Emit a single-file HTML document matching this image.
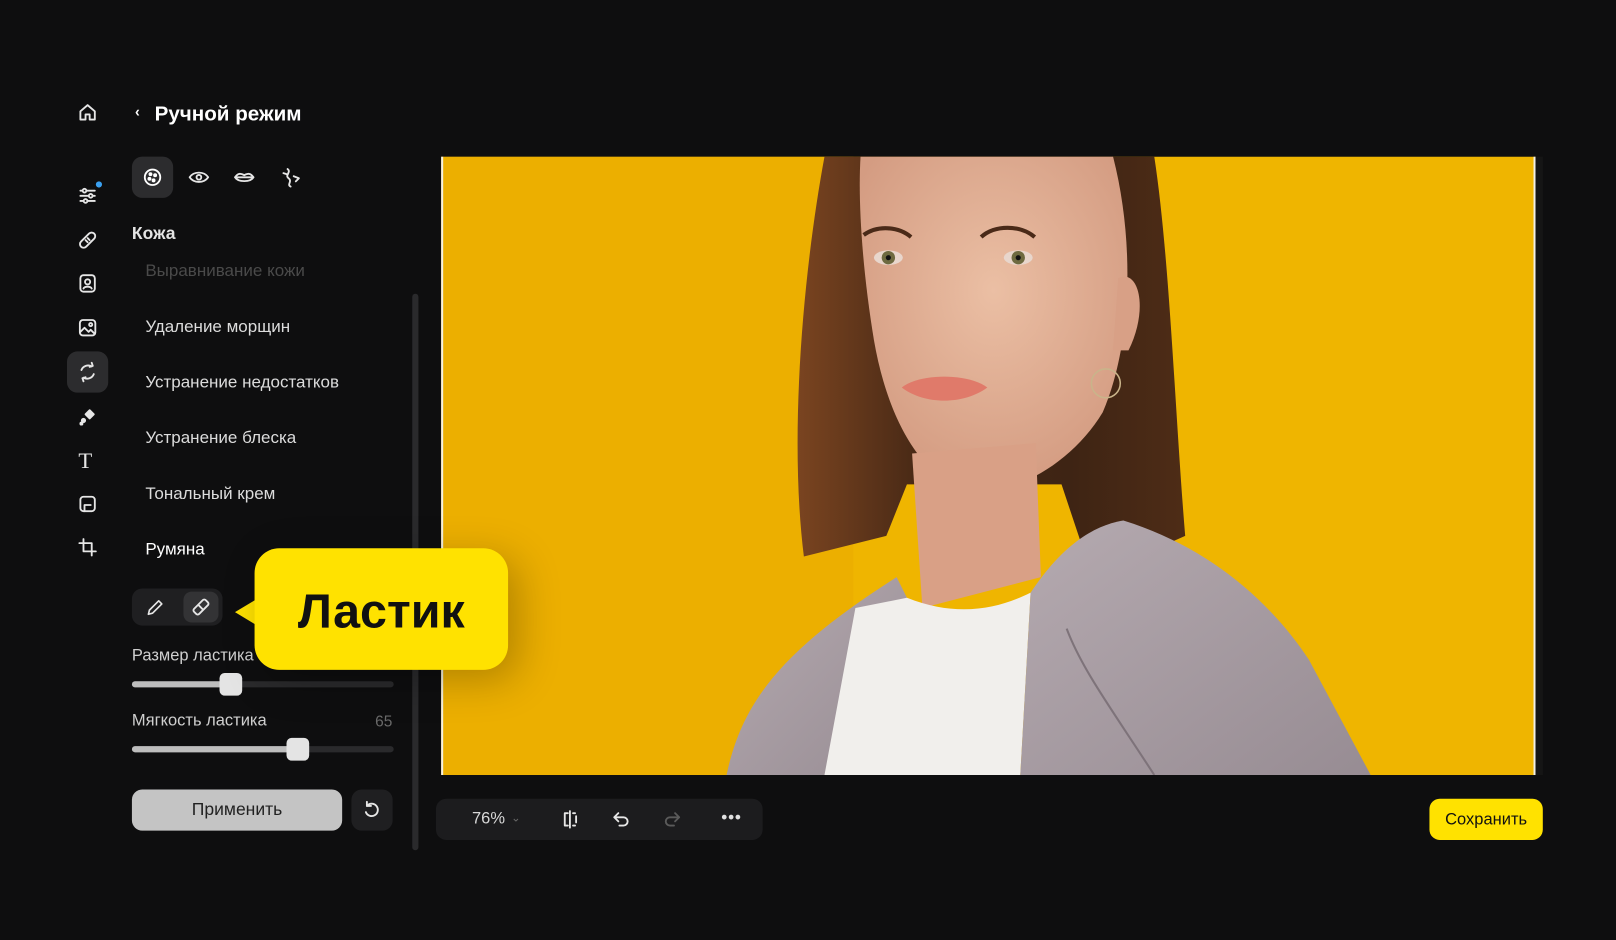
<!DOCTYPE html>
<html><head><meta charset="utf-8">
<style>
html,body{margin:0;padding:0;background:#0e0e0f;width:1616px;height:940px;overflow:hidden;font-family:"Liberation Sans","DejaVu Sans",sans-serif;}
#w{position:absolute;left:0;top:0;width:1568px;height:912px;transform:scale(1.0306);transform-origin:0 0;}
.a{position:absolute}
.ic{position:absolute;width:22px;height:22px;}
.ic svg{width:22px;height:22px;fill:none;stroke:#e6e6e6;stroke-width:1.8;stroke-linecap:round;stroke-linejoin:round}
.li{position:absolute;left:141px;font-size:16.5px;color:#dcdcdc;line-height:20px}
</style></head><body><div id="w">

<!-- left rail icons -->
<div class="ic" style="left:74px;top:98px"><svg viewBox="0 0 22 22"><path d="M4 10 L11 4 L18 10 V18 H13 V13 H9 V18 H4 Z"/></svg></div>
<div class="ic" style="left:74px;top:178px"><svg viewBox="0 0 22 22"><path d="M4 7h14M4 12h14M4 17h14"/><circle cx="8" cy="7" r="1.8" fill="#0e0e0f"/><circle cx="14" cy="12" r="1.8" fill="#0e0e0f"/><circle cx="9" cy="17" r="1.8" fill="#0e0e0f"/></svg></div>
<div class="a" style="left:93px;top:176px;width:6px;height:6px;border-radius:3px;background:#3aa0f0"></div>
<div class="ic" style="left:74px;top:222px"><svg viewBox="0 0 22 22"><rect x="2" y="7.5" width="18" height="7" rx="3.5" transform="rotate(-45 11 11)"/><path d="M9 11l2 2M11 9l2 2"/></svg></div>
<div class="ic" style="left:74px;top:264px"><svg viewBox="0 0 22 22"><rect x="4" y="3" width="14" height="16" rx="3"/><circle cx="11" cy="9.5" r="2.5"/><path d="M7 16c1-2.5 7-2.5 8 0"/></svg></div>
<div class="ic" style="left:74px;top:307px"><svg viewBox="0 0 22 22"><rect x="3.5" y="3.5" width="15" height="15" rx="3"/><path d="M4 15l4-4 4 4 2-2 4 4"/><circle cx="14" cy="8" r="1.5"/></svg></div>
<div class="a" style="left:65px;top:341px;width:40px;height:40px;border-radius:10px;background:#2c2c2e"></div>
<div class="ic" style="left:74px;top:350px"><svg viewBox="0 0 22 22"><path d="M15 5.5A7 7 0 0 0 5 9M7 16.5A7 7 0 0 0 17 13"/><path d="M15 2l1 3-3 1M7 20l-1-3 3-1"/></svg></div>
<div class="ic" style="left:74px;top:393px"><svg viewBox="0 0 22 22"><path d="M13 5l4 4-4 4-4-4z" fill="#e6e6e6"/><circle cx="7" cy="15" r="1.6" fill="#e6e6e6"/><circle cx="5" cy="18" r="1" fill="#e6e6e6"/></svg></div>
<div class="a" style="left:76px;top:434px;font-family:'Liberation Serif',serif;font-size:22px;color:#e6e6e6">T</div>
<div class="ic" style="left:74px;top:478px"><svg viewBox="0 0 22 22"><rect x="4" y="4" width="14" height="14" rx="3"/><path d="M8 18v-6h6"/></svg></div>
<div class="ic" style="left:74px;top:520px"><svg viewBox="0 0 22 22"><path d="M7 3v12h12M3 7h12v12"/></svg></div>

<!-- title -->
<div class="a" style="left:131px;top:100px;color:#fff;font-size:14px;font-weight:bold">‹</div>
<div class="a" style="left:150px;top:100px;color:#fff;font-size:20px;font-weight:bold">Ручной режим</div>

<!-- tabs -->
<div class="a" style="left:128px;top:152px;width:40px;height:40px;border-radius:10px;background:#2c2c2e"></div>
<div class="ic" style="left:137px;top:161px"><svg viewBox="0 0 22 22" style="stroke:#fff"><circle cx="11" cy="11" r="7.5"/><circle cx="9" cy="8" r="1" fill="#fff"/><circle cx="13.5" cy="9" r="1" fill="#fff"/><circle cx="8" cy="12.5" r="1" fill="#fff"/><circle cx="12" cy="14" r="1" fill="#fff"/></svg></div>
<div class="ic" style="left:182px;top:161px"><svg viewBox="0 0 22 22"><path d="M2 11c4-6 14-6 18 0c-4 6-14 6-18 0z"/><circle cx="11" cy="11" r="2.3"/></svg></div>
<div class="ic" style="left:226px;top:161px"><svg viewBox="0 0 22 22"><path d="M2 11c3-4 5-4 9-2c4-2 6-2 9 2c-3 5-15 5-18 0z M3 11h16"/></svg></div>
<div class="ic" style="left:271px;top:161px"><svg viewBox="0 0 22 22"><path d="M8 3c4 3-3 6 1 9s-2 6 2 8M4 7l3 1M14 10l5 2M16 15l3-3"/></svg></div>

<div class="a" style="left:128px;top:217px;color:#e4e4e4;font-size:17px;font-weight:bold">Кожа</div>
<div class="li" style="top:253px;color:#4a4a4a">Выравнивание кожи</div>
<div class="li" style="top:307px">Удаление морщин</div>
<div class="li" style="top:361px">Устранение недостатков</div>
<div class="li" style="top:415px">Устранение блеска</div>
<div class="li" style="top:469px">Тональный крем</div>
<div class="li" style="top:523px;color:#fff">Румяна</div>
<div class="a" style="left:400px;top:285px;width:6px;height:540px;border-radius:3px;background:#2a2a2c"></div>

<!-- tools -->
<div class="a" style="left:128px;top:571px;width:88px;height:36px;border-radius:10px;background:#1f1f21"></div>
<div class="a" style="left:178px;top:574px;width:34px;height:30px;border-radius:8px;background:#333335"></div>
<div class="ic" style="left:139px;top:578px"><svg viewBox="0 0 22 22" style="stroke-width:1.6"><path d="M5 18l1-4 9-9 3 3-9 9z"/></svg></div>
<div class="ic" style="left:184px;top:578px"><svg viewBox="0 0 22 22"><rect x="3" y="7.5" width="16" height="7" rx="2" transform="rotate(-45 11 11)"/><path d="M8.5 9l4.5 4.5"/></svg></div>

<div class="a" style="left:128px;top:628px;color:#cfcfcf;font-size:16px">Размер ластика</div>
<div class="a" style="left:128px;top:661px;width:254px;height:6px;border-radius:3px;background:#2a2a2c"></div>
<div class="a" style="left:128px;top:661px;width:96px;height:6px;border-radius:3px;background:#bdbdbd"></div>
<div class="a" style="left:213px;top:653px;width:22px;height:22px;border-radius:5px;background:#e4e4e4"></div>
<div class="a" style="left:128px;top:691px;color:#cfcfcf;font-size:16px">Мягкость ластика</div>
<div class="a" style="left:364px;top:692px;color:#6a6a6a;font-size:15px">65</div>
<div class="a" style="left:128px;top:724px;width:254px;height:6px;border-radius:3px;background:#2a2a2c"></div>
<div class="a" style="left:128px;top:724px;width:161px;height:6px;border-radius:3px;background:#bdbdbd"></div>
<div class="a" style="left:278px;top:716px;width:22px;height:22px;border-radius:5px;background:#e4e4e4"></div>

<div class="a" style="left:128px;top:766px;width:204px;height:40px;border-radius:10px;background:#c4c4c4;color:#222;font-size:17px;text-align:center;line-height:40px">Применить</div>
<div class="a" style="left:341px;top:766px;width:40px;height:40px;border-radius:10px;background:#1f1f21"></div>
<div class="ic" style="left:350px;top:775px"><svg viewBox="0 0 22 22"><path d="M6 7a6 6 0 1 1-1 6"/><path d="M6 3v4h4"/></svg></div>

<!-- photo -->
<svg class="a" style="left:428px;top:152px" width="1062" height="600" viewBox="428 152 1062 600">
<defs>
<linearGradient id="hair" x1="0" y1="0" x2="1" y2="0"><stop offset="0" stop-color="#7a4420"/><stop offset=".3" stop-color="#4a2a16"/><stop offset=".7" stop-color="#3e2414"/><stop offset="1" stop-color="#4e2c16"/></linearGradient>
<radialGradient id="skin" cx=".5" cy=".4" r=".6"><stop offset="0" stop-color="#ebbfa4"/><stop offset="1" stop-color="#d49c82"/></radialGradient>
<linearGradient id="coat" x1="0" y1="0" x2="1" y2="1"><stop offset="0" stop-color="#b5aab0"/><stop offset="1" stop-color="#978c93"/></linearGradient>
</defs>
<rect x="428" y="152" width="1062" height="600" fill="#efb500"/>
<rect x="428" y="152" width="400" height="600" fill="#eaaa00" opacity=".5"/>
<path d="M800 152 L1120 152 C1135 250 1140 400 1150 520 L1060 560 L1030 470 L880 470 L860 520 L780 540 C765 420 780 260 800 152Z" fill="url(#hair)"/>
<path d="M835 152 L1080 152 C1100 230 1100 330 1070 400 C1040 450 980 485 935 475 C890 460 860 400 848 330 C838 270 832 200 835 152Z" fill="url(#skin)"/>
<path d="M1085 270 C1105 260 1115 300 1095 340 L1080 340 Z" fill="#d8a086"/>
<path d="M885 440 L1005 430 L1010 560 L895 590 Z" fill="#d9a086"/>
<path d="M838 228 C852 218 872 220 884 230 M952 230 C965 218 990 218 1004 230" stroke="#4a2a18" stroke-width="4" fill="none"/>
<ellipse cx="862" cy="250" rx="14" ry="7" fill="#e8d6cc"/><circle cx="862" cy="250" r="6.5" fill="#6e6a40"/><circle cx="862" cy="250" r="2.5" fill="#111"/>
<ellipse cx="988" cy="250" rx="14" ry="7" fill="#e8d6cc"/><circle cx="988" cy="250" r="6.5" fill="#6e6a40"/><circle cx="988" cy="250" r="2.5" fill="#111"/>
<path d="M875 376 C892 362 940 362 958 376 C935 393 897 393 875 376Z" fill="#e07a6a"/>
<circle cx="1073" cy="372" r="14" stroke="#c9b48a" stroke-width="1.5" fill="none"/>
<path d="M705 752 C720 680 760 630 870 560 L890 600 L800 752 Z" fill="url(#coat)"/>
<path d="M800 752 L830 590 L880 580 C930 600 970 590 1000 575 L990 752 Z" fill="#f1efec"/>
<path d="M990 752 L1000 575 C1030 530 1060 510 1090 505 C1170 530 1230 580 1270 640 L1330 752 Z" fill="url(#coat)"/>
<path d="M1035 610 C1050 650 1080 690 1120 752" stroke="#7e737a" stroke-width="2" fill="none"/>
<rect x="428" y="152" width="2" height="600" fill="#f4f1e6"/>
<rect x="1488" y="152" width="2" height="600" fill="#f4f1e6"/>
</svg>
<div class="a" style="left:1490px;top:152px;width:7px;height:600px;background:#151515"></div>

<!-- callout -->
<div class="a" style="left:228px;top:582px;width:0;height:0;border-top:12px solid transparent;border-bottom:12px solid transparent;border-right:20px solid #ffe200"></div>
<div class="a" style="left:247px;top:532px;width:246px;height:118px;border-radius:24px;background:#ffe200;box-shadow:10px 10px 40px rgba(0,0,0,.25);color:#111;font-size:47px;font-weight:bold;text-align:center;line-height:122px">Ластик</div>

<!-- bottom toolbar -->
<div class="a" style="left:423px;top:775px;width:317px;height:40px;border-radius:10px;background:#1c1c1e"></div>
<div class="a" style="left:458px;top:786px;color:#d8d8d8;font-size:16px">76%</div>
<div class="a" style="left:496px;top:787px;color:#666;font-size:11px">⌄</div>
<div class="ic" style="left:542px;top:784px"><svg viewBox="0 0 22 22"><path d="M11 3v16M9 5H6v12h3M14 5h2M14 17h2M17 8v6"/></svg></div>
<div class="ic" style="left:592px;top:784px"><svg viewBox="0 0 22 22"><path d="M8 5L4 9l4 4M4 9h9a4 4 0 0 1 0 8h-4"/></svg></div>
<div class="ic" style="left:641px;top:784px"><svg viewBox="0 0 22 22" style="stroke:#5a5a5a"><path d="M14 5l4 4-4 4M18 9H9a4 4 0 0 0 0 8h4"/></svg></div>
<div class="a" style="left:700px;top:785px;color:#e0e0e0;font-size:16px;font-weight:bold;letter-spacing:1px">•••</div>

<div class="a" style="left:1387px;top:775px;width:110px;height:40px;border-radius:10px;background:#ffe200;color:#111;font-size:16px;text-align:center;line-height:41px">Сохранить</div>
</div></body></html>
